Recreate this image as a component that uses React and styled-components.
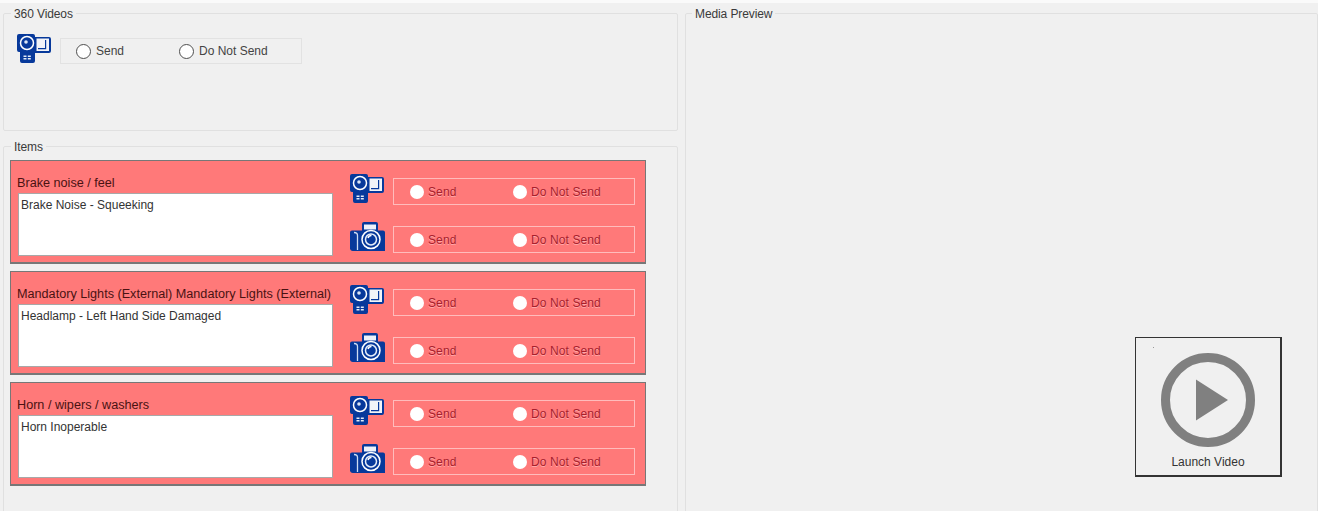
import React from "react";
import styled, { createGlobalStyle } from "styled-components";

const Global = createGlobalStyle`
  html, body { margin: 0; padding: 0; height: 100%; background: #f0f0f0; overflow: hidden; }
  body { font-family: "Liberation Sans", Arial, sans-serif; font-size: 12px; color: #333; }
`;

const Page = styled.div`
  width: 1318px;
  height: 511px;
  box-sizing: border-box;
  overflow: hidden;
  border-top: 3px solid #fafafa;
  padding: 3px 0 0 3px;
  display: grid;
  grid-template-columns: 675px 1fr;
  column-gap: 7px;
`;

const LeftColumn = styled.div`
  display: flex;
  flex-direction: column;
  gap: 8px;
  height: 540px;
`;

const Group = styled.fieldset`
  margin: 0;
  padding: 0;
  min-width: 0;
  box-sizing: border-box;
  border: 1px solid #e0e0e0;
  border-radius: 2px;
  height: ${(p) => p.$height};
  flex: ${(p) => (p.$grow ? "1" : "none")};
`;

const Legend = styled.legend`
  margin-left: ${(p) => p.$indent || "7px"};
  padding: 0 3px;
  height: 14px;
  font-size: 12px;
  line-height: 16px;
  color: #3a3a3a;
  letter-spacing: -0.1px;
`;

const VideosRow = styled.div`
  display: flex;
  align-items: flex-start;
  gap: 8px;
  padding: 14px 0 0 13px;
`;

const ItemsList = styled.div`
  display: flex;
  flex-direction: column;
  gap: 7px;
  padding: 7px 0 0 6px;
`;

const Card = styled.section`
  width: 636px;
  height: 104px;
  box-sizing: border-box;
  background: #ff7979;
  border: 1px solid #777;
  border-bottom-width: 2px;
  display: flex;
  justify-content: space-between;
  padding: 13px 10px 0 6px;
`;

const CardText = styled.div`
  width: 316px;
  display: flex;
  flex-direction: column;
`;

const CardTitle = styled.div`
  height: 19px;
  font-size: 12.65px;
  line-height: 19px;
  color: #4a1212;
  white-space: nowrap;
`;

const Description = styled.div`
  margin-left: 1px;
  height: 63px;
  box-sizing: border-box;
  background: #fff;
  border: 1px solid #a8a8a8;
  padding: 4px 2px;
  line-height: 14px;
  color: #333;
`;

const CardChoices = styled.div`
  width: 285px;
  display: flex;
  flex-direction: column;
  gap: 17px;
`;

const ChoiceRow = styled.div`
  display: flex;
  align-items: flex-start;
  justify-content: space-between;
  height: 31px;
`;

const ChoiceBox = styled.div`
  width: 242px;
  height: ${(p) => (p.$onRed ? "27px" : "26px")};
  margin-top: 4px;
  box-sizing: border-box;
  border: 1px solid ${(p) => (p.$onRed ? "#ffbcbc" : "#e2e2e2")};
  display: flex;
  align-items: center;
  padding-left: ${(p) => (p.$onRed ? "16px" : "15px")};
`;

const Choice = styled.label`
  width: 103px;
  display: flex;
  align-items: center;
  gap: ${(p) => (p.$onRed ? "4px" : "5px")};
  line-height: 14px;
  white-space: nowrap;
  letter-spacing: ${(p) => (p.$onRed ? "0.1px" : "0")};
  color: ${(p) => (p.$onRed ? "#a8202c" : "#444")};
  text-shadow: ${(p) => (p.$onRed ? "0 1px 0 rgba(255,190,190,.7)" : "none")};
`;

const Radio = styled.input.attrs({ type: "radio" })`
  appearance: none;
  margin: 0;
  width: ${(p) => (p.$onRed ? "14px" : "15px")};
  height: ${(p) => (p.$onRed ? "14px" : "15px")};
  flex: none;
  box-sizing: border-box;
  border-radius: 50%;
  background: #fff;
  border: ${(p) => (p.$onRed ? "none" : "1px solid #4f4f4f")};
`;

const PreviewColumn = styled.div`
  height: 540px;
`;

const PreviewBody = styled.div`
  display: flex;
  justify-content: flex-end;
  padding: 317px 35px 0 0;
`;

const LaunchButton = styled.button`
  position: relative;
  width: 147px;
  height: 140px;
  box-sizing: border-box;
  border: 1px solid #333;
  border-bottom-width: 2px;
  border-right-width: 2px;
  background: transparent;
  padding: 14px 0 0;
  display: flex;
  flex-direction: column;
  align-items: center;
  font: 12px "Liberation Sans", Arial, sans-serif;
  color: #333;

  &::before {
    content: "";
    position: absolute;
    left: 17px;
    top: 9px;
    width: 1px;
    height: 1px;
    background: #999;
  }
`;

const ButtonLabel = styled.span`
  margin-top: 7px;
  line-height: 14px;
`;

const IconSvg = styled.svg`
  display: block;
  flex: none;
  margin-left: ${(p) => p.$shift || "0"};
`;

const BLUE = "#07399b";

const VideoIcon = () => (
  <IconSvg width="35" height="29" viewBox="0 0 35 29">
    <path d="M2 0h14a2 2 0 0 1 2 2v1h14a2 2 0 0 1 2 2v12a2 2 0 0 1-2 2H18v8a2 2 0 0 1-2 2H5a2 2 0 0 1-2-2v-9H2a2 2 0 0 1-2-2V2a2 2 0 0 1 2-2z" fill={BLUE} />
    <rect x="19.5" y="4.5" width="12.5" height="12.5" fill="#f2f4f8" />
    <path d="M28.6 6v8.6H21" fill="none" stroke={BLUE} strokeWidth="1.2" />
    <circle cx="10" cy="9" r="6.5" fill="none" stroke="#fff" strokeWidth="1.5" />
    <circle cx="9" cy="8" r="1.8" fill="#dbe6f6" />
    <path d="M6.5 21.5h3v1.4h-3zM10.8 21.5h3v1.4h-3zM6.5 24h3v1.4h-3zM10.8 24h3v1.4h-3z" fill="#e4ecf8" />
  </IconSvg>
);

const CameraIcon = () => (
  <IconSvg width="36" height="30" viewBox="0 0 36 30" $shift="-1px">
    <path d="M13 9V2a2 2 0 0 1 2-2h12a2 2 0 0 1 2 2v7z" fill={BLUE} />
    <rect x="15" y="2.5" width="12" height="5" fill="#eef2fa" />
    <path d="M3 8.5h31a2 2 0 0 1 2 2V29H4a3 3 0 0 1-3-2V10.5a2 2 0 0 1 2-2z" fill={BLUE} />
    <path d="M5 10.5c2 0 3.500 1 3.500 3V28" stroke="#cfdcf2" strokeWidth="1.3" fill="none" />
    <circle cx="22" cy="17.500" r="9" fill="none" stroke="#fff" strokeWidth="1.5" />
    <circle cx="22" cy="17.500" r="5.500" fill="none" stroke="#e6edf9" strokeWidth="1.5" />
    <path d="M19 16a3.500 3.500 0 0 1 3.500-2.500" stroke="#fff" strokeWidth="1.500" fill="none" />
  </IconSvg>
);

const PlayIcon = () => (
  <IconSvg width="96" height="96" viewBox="0 0 96 96">
    <circle cx="48" cy="48" r="42.500" fill="none" stroke="#808080" strokeWidth="9" />
    <path d="M36 27.500 68 48 36 68.500z" fill="#808080" />
  </IconSvg>
);

const ChoiceSet = ({ name, onRed }) => (
  <ChoiceBox $onRed={onRed}>
    <Choice $onRed={onRed}>
      <Radio name={name} $onRed={onRed} disabled={onRed} />
      Send
    </Choice>
    <Choice $onRed={onRed}>
      <Radio name={name} $onRed={onRed} disabled={onRed} />
      Do Not Send
    </Choice>
  </ChoiceBox>
);

const items = [
  { title: "Brake noise / feel", text: "Brake Noise - Squeeking" },
  {
    title: "Mandatory Lights (External) Mandatory Lights (External)",
    text: "Headlamp - Left Hand Side Damaged",
  },
  { title: "Horn / wipers / washers", text: "Horn Inoperable" },
];

export default function App() {
  return (
    <Page>
      <Global />
      <LeftColumn>
        <Group $height="125px">
          <Legend>360 Videos</Legend>
          <VideosRow>
            <VideoIcon />
            <ChoiceSet name="videos" />
          </VideosRow>
        </Group>
        <Group $grow>
          <Legend>Items</Legend>
          <ItemsList>
            {items.map((item, i) => (
              <Card key={item.title}>
                <CardText>
                  <CardTitle>{item.title}</CardTitle>
                  <Description>{item.text}</Description>
                </CardText>
                <CardChoices>
                  <ChoiceRow>
                    <VideoIcon />
                    <ChoiceSet name={`video-${i}`} onRed />
                  </ChoiceRow>
                  <ChoiceRow>
                    <CameraIcon />
                    <ChoiceSet name={`photo-${i}`} onRed />
                  </ChoiceRow>
                </CardChoices>
              </Card>
            ))}
          </ItemsList>
        </Group>
      </LeftColumn>
      <PreviewColumn>
        <Group $height="540px">
          <Legend $indent="6px">Media Preview</Legend>
          <PreviewBody>
            <LaunchButton>
              <PlayIcon />
              <ButtonLabel>Launch Video</ButtonLabel>
            </LaunchButton>
          </PreviewBody>
        </Group>
      </PreviewColumn>
    </Page>
  );
}
